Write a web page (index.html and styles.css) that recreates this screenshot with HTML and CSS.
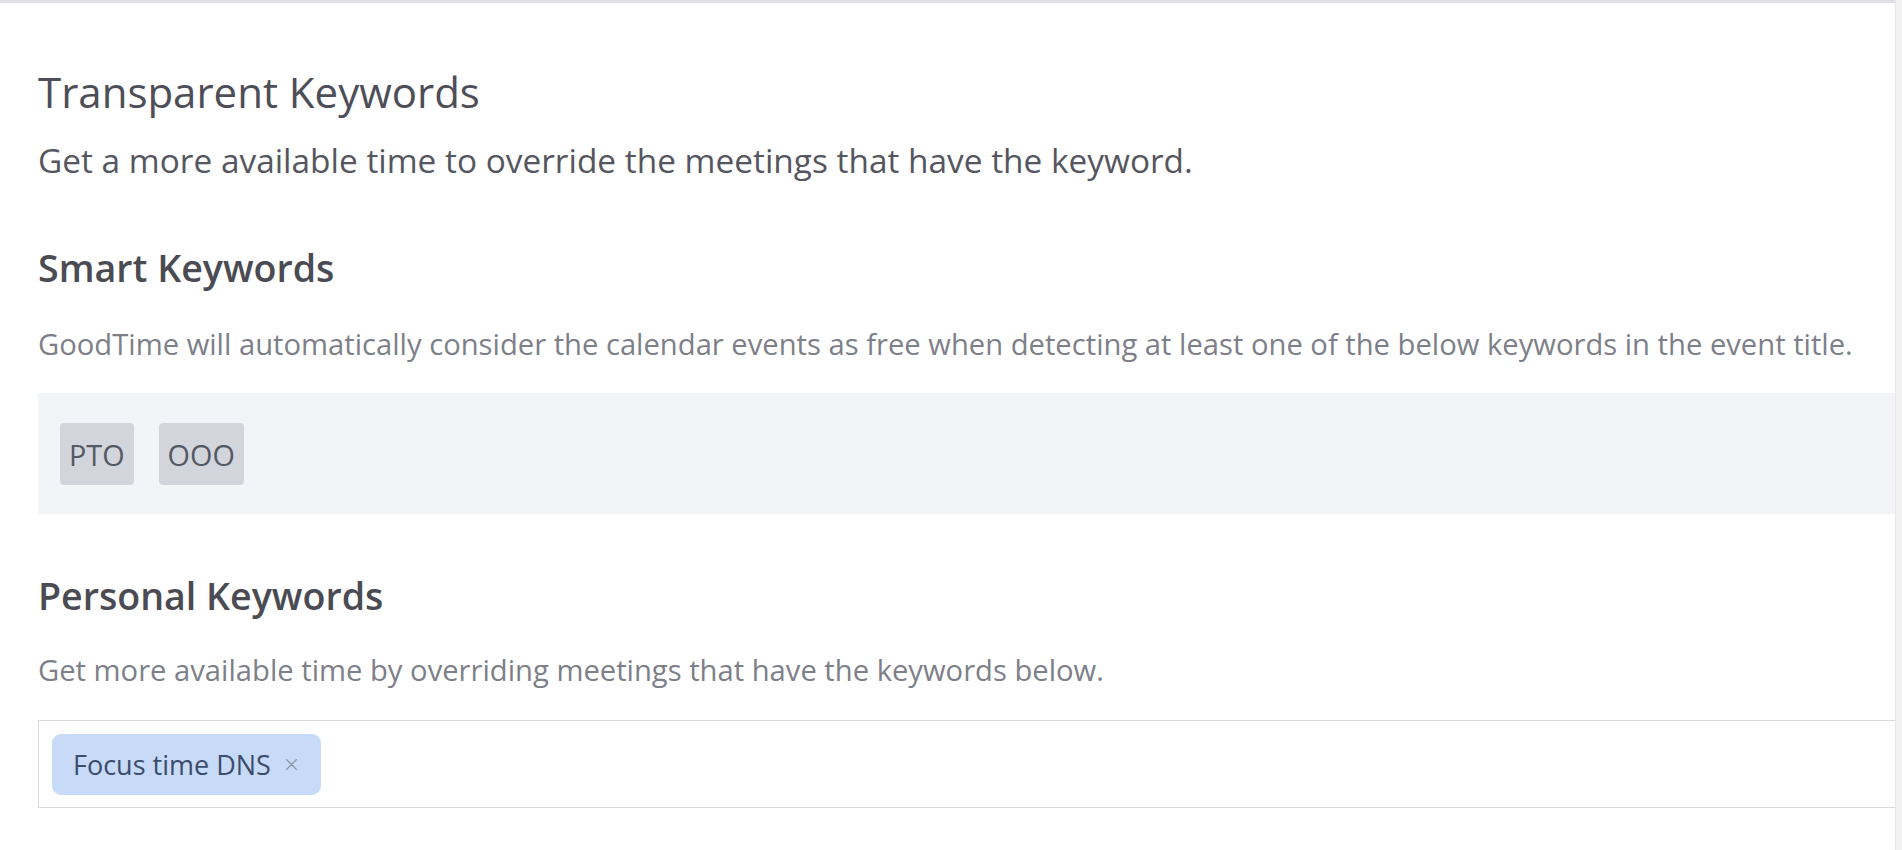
FILE: index.html
```html
<!DOCTYPE html>
<html lang="en">
<head>
<meta charset="utf-8">
<title>Transparent Keywords</title>
<link rel="stylesheet" href="styles.css">
</head>
<body>
<div class="page">
  <main class="main">
    <h1 class="title">Transparent Keywords</h1>
    <p class="lead">Get a more available time to override the meetings that have the keyword.</p>

    <section class="group smart">
      <h2 class="subtitle">Smart Keywords</h2>
      <p class="hint">GoodTime will automatically consider the calendar events as free when detecting at least one of the below keywords in the event title.</p>
      <div class="chip-box">
        <span class="chip">PTO</span>
        <span class="chip">OOO</span>
      </div>
    </section>

    <section class="group personal">
      <h2 class="subtitle">Personal Keywords</h2>
      <p class="hint">Get more available time by overriding meetings that have the keywords below.</p>
      <div class="tag-input">
        <span class="tag">Focus time DNS
          <svg class="tag-x" viewBox="0 0 12 12" width="13" height="13" aria-hidden="true"><path d="M1.5 1.5 L10.5 10.5 M10.5 1.5 L1.5 10.5" stroke="#8e96a6" stroke-width="1.3" fill="none" stroke-linecap="round"/></svg>
        </span>
      </div>
    </section>
  </main>
  <div class="scroll-strip"></div>
</div>
</body>
</html>
```

FILE: styles.css
```css
html, body {
  margin: 0;
  padding: 0;
  background: #ffffff;
}

body {
  font-family: "Open Sans", "Liberation Sans", sans-serif;
  color: #4b4c55;
}

.page {
  display: flex;
  height: 850px;
  overflow: hidden;
}

.main {
  flex: 1;
  min-width: 0;
  border-top: 3px solid #dfe0e7;
  padding: 60px 0 0 38px;
  box-sizing: border-box;
}

.scroll-strip {
  width: 6px;
  background: #f2f2f3;
  border-left: 1px solid #e8e8ea;
}

.title {
  margin: 0;
  font-size: 42px;
  line-height: 57px;
  font-weight: 400;
  color: #4d4e58;
}

.lead {
  margin: 18px 0 0;
  font-size: 33.4px;
  line-height: 45px;
  color: #55565f;
}

.subtitle {
  margin: 0;
  font-size: 37.6px;
  line-height: 50px;
  font-weight: 600;
  color: #4a4b53;
}

.smart {
  margin-top: 60px;
}

.personal {
  margin-top: 57px;
}

.hint {
  margin: 32px 0 0;
  font-size: 29.2px;
  line-height: 38px;
  color: #7e8089;
}

.personal .hint {
  margin-top: 30px;
}

.chip-box {
  margin-top: 30px;
  background: #f3f4f7;
  height: 121px;
  box-sizing: border-box;
  padding: 30px 22px 0;
  display: flex;
  gap: 25px;
  align-items: flex-start;
}

.chip {
  display: inline-flex;
  align-items: center;
  justify-content: center;
  height: 62px;
  padding: 0 9px;
  background: #d3d5dc;
  border-radius: 4px;
  font-size: 28.8px;
  color: #555963;
}

.tag-input {
  margin-top: 31px;
  height: 88px;
  box-sizing: border-box;
  border: 1px solid #d9dade;
  border-right: none;
  background: #ffffff;
  padding: 13px 13px;
  display: flex;
  align-items: center;
}

.tag {
  display: inline-flex;
  align-items: center;
  gap: 14px;
  height: 61px;
  box-sizing: border-box;
  padding: 0 23px 0 21px;
  background: #c7daf8;
  border-radius: 9px;
  font-size: 27px;
  color: #3c4d6c;
}

.tag-x {
  flex: none;
}
```
